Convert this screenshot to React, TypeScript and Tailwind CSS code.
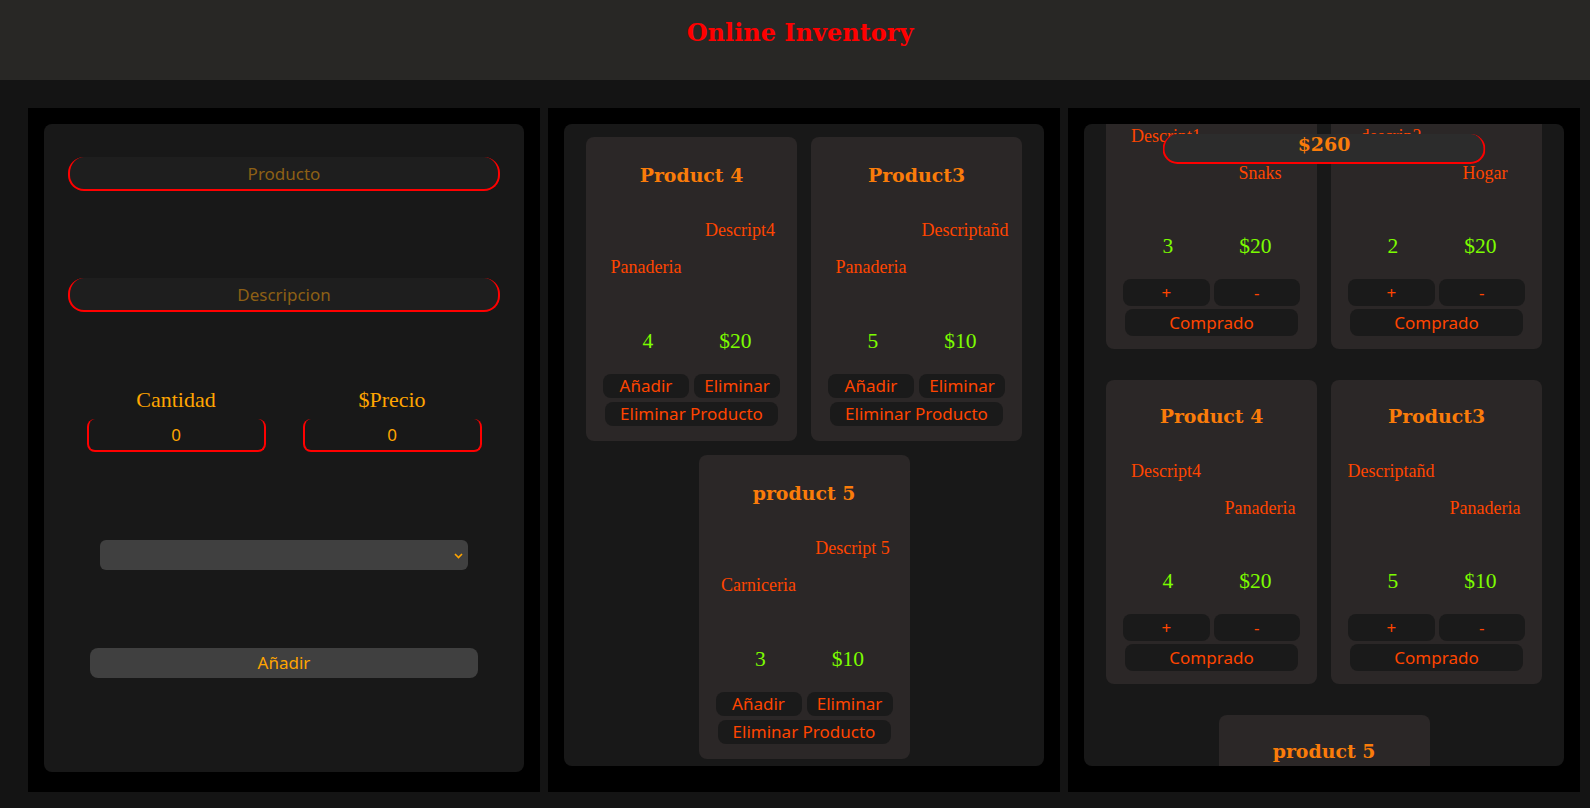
import { useLayoutEffect, useRef } from 'react';

type Item = {
  name: string;
  desc: string;
  cat: string;
  qty: number;
  price: number;
};

const stock: Item[] = [
  { name: 'Product 4', desc: 'Descript4', cat: 'Panaderia', qty: 4, price: 20 },
  { name: 'Product3', desc: 'Descriptañd', cat: 'Panaderia', qty: 5, price: 10 },
  { name: 'product 5', desc: 'Descript 5', cat: 'Carniceria', qty: 3, price: 10 },
];

const cart: Item[] = [
  { name: 'Product 1', desc: 'Descript1', cat: 'Snaks', qty: 3, price: 20 },
  { name: 'Product 2', desc: 'descrip2', cat: 'Hogar', qty: 2, price: 20 },
  ...stock,
];

const sans = "font-['Noto_Sans',sans-serif]";

// card in the middle column: Añadir / Eliminar / Eliminar Producto
const StockCard = ({ item }: { item: Item }) => (
  <div className="flex h-[304px] w-[211px] flex-col rounded-lg bg-[#2b2727]">
    <h3 className="mt-[25px] text-center font-['DejaVu_Serif',serif] text-[18.9px] font-bold leading-[26px] text-[#fa7c0a]">
      {item.name}
    </h3>
    <div className="mt-[32px] grid grid-cols-2 pl-[13px] pr-[10px] text-[18px] leading-[20px] text-[#ff4500]">
      <span />
      <span className="whitespace-nowrap text-center">{item.desc}</span>
    </div>
    <div className="mt-[17px] grid grid-cols-2 pl-[13px] pr-[10px] text-[18px] leading-[20px] text-[#ff4500]">
      <span className="whitespace-nowrap text-center">{item.cat}</span>
      <span />
    </div>
    <div className="mt-[51px] grid grid-cols-2 px-[18px] text-center text-[21.5px] leading-[26px] text-[#7cfc00]">
      <span>{item.qty}</span>
      <span>${item.price}</span>
    </div>
    <div className={`mt-[20px] flex gap-[5px] px-[17px] ${sans}`}>
      <button className="h-[24px] flex-1 rounded-lg bg-[#1a1a1a] text-[17px] leading-[24px] text-[#ff4500]">
        Añadir
      </button>
      <button className="h-[24px] flex-1 rounded-lg bg-[#1a1a1a] text-[17px] leading-[24px] text-[#ff4500]">
        Eliminar
      </button>
    </div>
    <button
      className={`mx-[19px] mt-[4px] h-[24px] rounded-lg bg-[#1a1a1a] text-[17px] leading-[24px] text-[#ff4500] ${sans}`}
    >
      Eliminar Producto
    </button>
  </div>
);

// card in the right column: + / - / Comprado
const CartCard = ({ item }: { item: Item }) => (
  <div className="flex h-[304px] w-[211px] shrink-0 flex-col rounded-lg bg-[#2b2727]">
    <h3 className="mt-[23px] text-center font-['DejaVu_Serif',serif] text-[18.9px] font-bold leading-[26px] text-[#fa7c0a]">
      {item.name}
    </h3>
    <div className="mt-[32px] grid grid-cols-2 pl-[13px] pr-[10px] text-[18px] leading-[20px] text-[#ff4500]">
      <span className="whitespace-nowrap text-center">{item.desc}</span>
      <span />
    </div>
    <div className="mt-[17px] grid grid-cols-2 pl-[13px] pr-[10px] text-[18px] leading-[20px] text-[#ff4500]">
      <span />
      <span className="whitespace-nowrap text-center">{item.cat}</span>
    </div>
    <div className="mt-[50px] grid grid-cols-2 px-[18px] text-center text-[21.5px] leading-[26px] text-[#7cfc00]">
      <span>{item.qty}</span>
      <span>${item.price}</span>
    </div>
    <div className={`mt-[20px] flex gap-[4px] px-[17px] ${sans}`}>
      <button className="h-[27px] flex-1 rounded-lg bg-[#1a1a1a] text-[17px] leading-[27px] text-[#ff4500]">
        +
      </button>
      <button className="h-[27px] flex-1 rounded-lg bg-[#1a1a1a] text-[17px] leading-[27px] text-[#ff4500]">
        -
      </button>
    </div>
    <button
      className={`mx-[19px] mt-[3px] h-[27px] rounded-lg bg-[#1a1a1a] text-[17px] leading-[27px] text-[#ff4500] ${sans}`}
    >
      Comprado
    </button>
  </div>
);

export default function App() {
  const cartRef = useRef<HTMLDivElement>(null);
  const total = cart.reduce((sum, p) => sum + p.qty * p.price, 0);

  useLayoutEffect(() => {
    if (cartRef.current) cartRef.current.scrollTop = 95;
  }, []);

  return (
    <div className="min-h-screen bg-[#141414] font-['Liberation_Serif',serif]">
      <header className="flex h-[80px] justify-center bg-[#282725] pl-[10px] pt-[18px]">
        <h1 className="font-['DejaVu_Serif',serif] text-[24px] font-bold leading-[30px] text-[#ff0000]">
          Online Inventory
        </h1>
      </header>

      <main className="grid grid-cols-3 gap-2 pb-[16px] pl-[28px] pr-[10px] pt-[28px]">
        {/* Form */}
        <div className="h-[684px] bg-black p-4">
          <div className="flex h-[648px] flex-col items-center rounded-lg bg-[#181818]">
            <input
              placeholder="Producto"
              className={`mt-[33px] h-[34px] w-[90%] rounded-[16px] border-2 border-t-0 border-[#ff0000] bg-[#1e1e1e] text-center text-[17px] text-[#ffa500] outline-none placeholder:text-[#8d6015] ${sans}`}
            />
            <input
              placeholder="Descripcion"
              className={`mt-[87px] h-[34px] w-[90%] rounded-[16px] border-2 border-t-0 border-[#ff0000] bg-[#1e1e1e] text-center text-[17px] text-[#ffa500] outline-none placeholder:text-[#8d6015] ${sans}`}
            />
            <div className="mt-[75px] grid w-[90%] grid-cols-2">
              <label className="flex flex-col items-center">
                <span className="text-[22px] leading-[26px] text-[#ffa500]">Cantidad</span>
                <input
                  defaultValue="0"
                  className={`mt-[6px] h-[33px] w-[179px] rounded-lg border-2 border-t-0 border-[#ff0000] bg-[#181818] text-center text-[17px] text-[#ffa500] outline-none ${sans}`}
                />
              </label>
              <label className="flex flex-col items-center">
                <span className="text-[22px] leading-[26px] text-[#ffa500]">$Precio</span>
                <input
                  defaultValue="0"
                  className={`mt-[6px] h-[33px] w-[179px] rounded-lg border-2 border-t-0 border-[#ff0000] bg-[#181818] text-center text-[17px] text-[#ffa500] outline-none ${sans}`}
                />
              </label>
            </div>
            <div className="relative mt-[88px] w-[368px]">
              <select className="block h-[30px] w-full appearance-none rounded-md bg-[#404040] text-[#ffa500] outline-none" />
              <svg
                className="pointer-events-none absolute right-[5px] top-[13px]"
                width="9"
                height="6"
                viewBox="0 0 9 6"
                fill="none"
              >
                <polyline points="1,1 4.5,4.5 8,1" stroke="#ffa500" strokeWidth="1.6" />
              </svg>
            </div>
            <button
              className={`mt-[78px] h-[30px] w-[388px] rounded-lg bg-[#404040] text-[17px] text-[#ffa500] ${sans}`}
            >
              Añadir
            </button>
          </div>
        </div>

        {/* Stock */}
        <div className="h-[684px] bg-black p-4">
          <div className="flex h-[642px] flex-wrap content-start justify-center gap-[14px] overflow-hidden rounded-lg bg-[#181818] pt-[13px]">
            {stock.map((p) => (
              <StockCard key={p.name} item={p} />
            ))}
          </div>
        </div>

        {/* Cart */}
        <div className="h-[684px] bg-black p-4">
          <div className="relative h-[642px] rounded-lg bg-[#181818]">
            <div
              ref={cartRef}
              className="flex h-full flex-wrap content-start justify-center gap-x-[14px] gap-y-[31px] overflow-hidden rounded-lg py-4"
            >
              {cart.map((p) => (
                <CartCard key={p.name} item={p} />
              ))}
            </div>
            <div className="absolute left-1/2 top-[10px] h-[30px] w-[323px] -translate-x-1/2 rounded-[16px] border-2 border-t-0 border-[#ff0000] bg-[#2c2c2c] text-center font-['DejaVu_Serif',serif] text-[18.9px] font-bold leading-[20px] text-[#fa7c0a]">
              ${total}
            </div>
          </div>
        </div>
      </main>
    </div>
  );
}
